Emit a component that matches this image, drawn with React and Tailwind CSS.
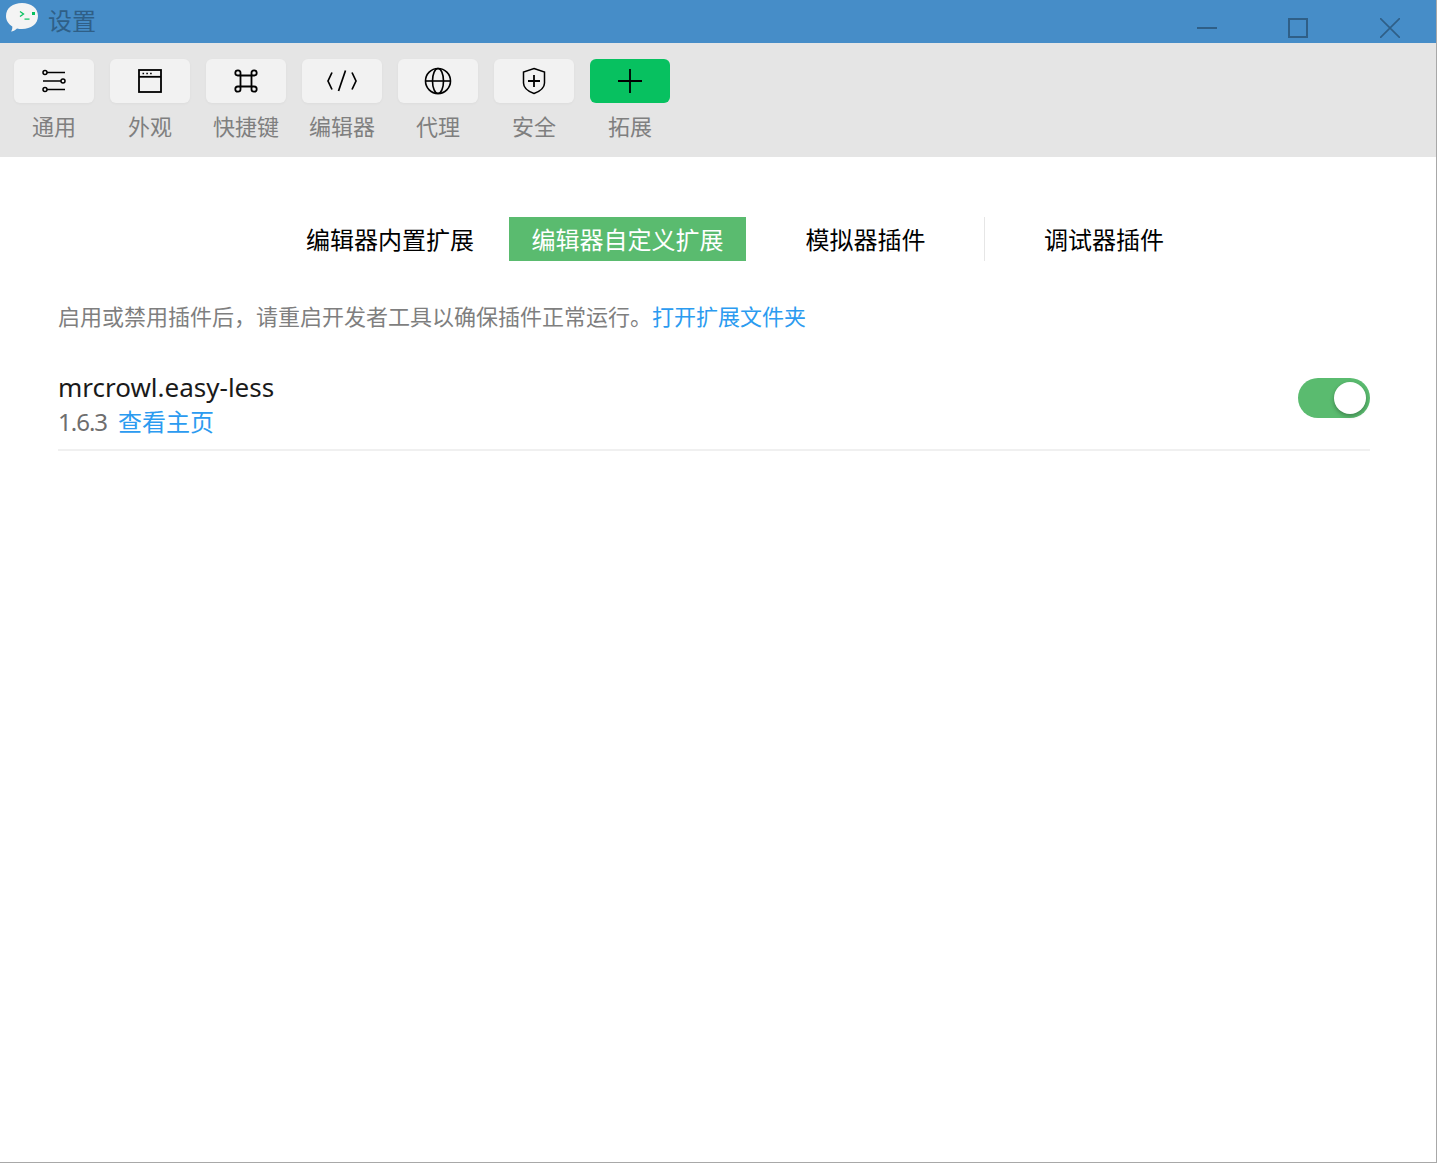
import React from 'react'

const tools = [
  {
    label: '通用',
    icon: (
      <svg width="26" height="26" viewBox="0 0 26 26" fill="none" stroke="#000" strokeWidth="1.5">
        <circle cx="4" cy="4.500" r="2" />
        <path d="M6 4.500h18" />
        <circle cx="22" cy="13" r="2" />
        <path d="M2 13h18" />
        <circle cx="4" cy="21.500" r="2" />
        <path d="M6 21.500h18" />
      </svg>
    ),
  },
  {
    label: '外观',
    icon: (
      <svg width="26" height="26" viewBox="0 0 26 26" fill="none" stroke="#000" strokeWidth="1.800">
        <rect x="2" y="2" width="22" height="22" />
        <path d="M2 8.800h22" />
        <path d="M5.500 5.400h1.600M9.300 5.400h1.600M13.100 5.400h1.600" strokeWidth="1.500" />
      </svg>
    ),
  },
  {
    label: '快捷键',
    icon: (
      <svg width="26" height="26" viewBox="0 0 26 26" fill="none" stroke="#000" strokeWidth="1.800">
        <path d="M7.500 7.500h11v11h-11z" />
        <path d="M7.500 7.500V5a2.600 2.600 0 1 0-2.700 2.500h2.700M18.500 7.500V5a2.600 2.600 0 1 1 2.700 2.500h-2.700M7.500 18.500V21a2.600 2.600 0 1 1-2.700-2.500h2.700M18.500 18.500V21a2.600 2.600 0 1 0 2.700-2.500h-2.700" />
      </svg>
    ),
  },
  {
    label: '编辑器',
    icon: (
      <svg width="32" height="26" viewBox="0 0 32 26" fill="none" stroke="#000" strokeWidth="1.700">
        <path d="M6 4.500 2 13l4 8.500" />
        <path d="M26 4.500 30 13l-4 8.500" />
        <path d="M19.500 2.500 12.500 23" />
      </svg>
    ),
  },
  {
    label: '代理',
    icon: (
      <svg width="28" height="28" viewBox="0 0 28 28" fill="none" stroke="#000" strokeWidth="1.600">
        <circle cx="14" cy="14" r="12.500" />
        <ellipse cx="14" cy="14" rx="5.500" ry="12.500" />
        <path d="M1.500 14h25" />
      </svg>
    ),
  },
  {
    label: '安全',
    icon: (
      <svg width="24" height="28" viewBox="0 0 24 28" fill="none" stroke="#000" strokeWidth="1.500">
        <path d="M12 1.500 22.500 5v11c0 5-5 8.500-10.500 10.500C6.500 24.500 1.500 21 1.500 16V5z" />
        <path d="M12 8v12M6 14h12" strokeWidth="1.800" />
      </svg>
    ),
  },
]

function ToolButton({ label, icon, active }) {
  return (
    <div className="flex w-20 flex-col items-center">
      <div
        className={`flex h-11 w-20 items-center justify-center rounded-md ${
          active ? 'bg-[#07c160]' : 'bg-[#f2f2f2] shadow-[0_1px_3px_rgba(0,0,0,0.04)]'
        }`}
      >
        {icon}
      </div>
      <span className="mt-[7px] text-[22px] leading-[32px] text-[#7f7f7f]">{label}</span>
    </div>
  )
}

const tabs = ['编辑器内置扩展', '编辑器自定义扩展', '模拟器插件', '调试器插件']

export default function App() {
  return (
    <div
      className="flex h-[1163px] w-[1437px] flex-col overflow-hidden border-r border-b border-[#a8a8a8] bg-white"
      style={{ fontFamily: '"Noto Sans", "Noto Sans CJK SC", sans-serif' }}
    >
      <div className="flex h-[43px] shrink-0 items-center bg-[#468dc8]">
        <svg className="ml-[6px] mb-[9px]" width="32" height="29" viewBox="0 0 32 29">
          <path d="M16 0c9 0 16 5 16 13s-7 13-16 13c-1.800 0-3.500-.2-5-.6C9 27 7 28.500 5 28.500c1-1.200 1.500-3 1.300-5C2.500 21 0 17.500 0 13 0 5 7 0 16 0z" fill="#f4f4f4" />
          <path d="M14 8.500l3.500 2.500-3.500 2.500" fill="none" stroke="#07c160" strokeWidth="1.300" />
          <rect x="26" y="9" width="3" height="3" fill="#07c160" />
          <rect x="18.500" y="15.500" width="5" height="1.200" fill="#07c160" />
        </svg>
        <span className="ml-[10px] mb-[2px] text-[24px] leading-none text-[#2f5f87]">设置</span>
        <div className="ml-auto mr-[36px] mt-[12px] flex items-center gap-[72px]">
          <svg className="mr-[-1px]" width="20" height="20" viewBox="0 0 20 20" fill="none" stroke="#2f5f87" strokeWidth="2">
            <path d="M0 10h20" />
          </svg>
          <svg width="20" height="20" viewBox="0 0 20 20" fill="none" stroke="#2f5f87" strokeWidth="2">
            <rect x="1" y="1" width="18" height="18" />
          </svg>
          <svg width="20" height="20" viewBox="0 0 20 20" fill="none" stroke="#2f5f87" strokeWidth="1.600">
            <path d="M0 0l20 20M20 0 0 20" />
          </svg>
        </div>
      </div>

      <div className="flex h-[114px] shrink-0 gap-4 bg-[#e5e5e5] pl-[14px] pt-4">
        {tools.map((t) => (
          <ToolButton key={t.label} label={t.label} icon={t.icon} />
        ))}
        <ToolButton
          label="拓展"
          active
          icon={
            <svg width="24" height="24" viewBox="0 0 24 24" fill="none" stroke="#000" strokeWidth="1.800">
              <path d="M12 0v24M0 12h24" />
            </svg>
          }
        />
      </div>

      <div className="flex flex-1 flex-col pt-[60px]">
        <div className="ml-[271px] flex h-11">
          {tabs.map((t, i) => (
            <div
              key={t}
              className={`flex items-center justify-center pt-[2px] text-[24px] ${
                i === 1 ? 'w-[237px] bg-[#5abb6f] text-white' : 'w-[238px] text-black'
              } ${i === 2 ? 'ml-px border-r border-[#e6e6e6]' : ''}`}
            >
              {t}
            </div>
          ))}
        </div>

        <p className="ml-[58px] mt-[39px] text-[22px] leading-[32px] text-[#7f7f7f]">
          启用或禁用插件后，请重启开发者工具以确保插件正常运行。
          <span className="text-[#2b9bf0]">打开扩展文件夹</span>
        </p>

        <div className="ml-[58px] mr-[66px] mt-[37px] flex h-[82px] items-start justify-between border-b-2 border-[#f0f0f0]">
          <div>
            <div className="text-[26px] leading-[36px] text-[#1a1a1a]">mrcrowl.easy-less</div>
            <div className="flex items-center text-[24px] leading-[34px]">
              <span className="tracking-[-1px] text-[#6e6e6e]">1.6.3</span>
              <span className="ml-[11px] text-[#2b9bf0]">查看主页</span>
            </div>
          </div>
          <div className="mt-[9px] flex h-10 w-[72px] items-center justify-end rounded-full bg-[#5abb6f] pr-[4px]">
            <div className="h-8 w-8 rounded-full bg-white shadow-[0_2px_4px_rgba(0,0,0,0.3)]" />
          </div>
        </div>
      </div>
    </div>
  )
}
